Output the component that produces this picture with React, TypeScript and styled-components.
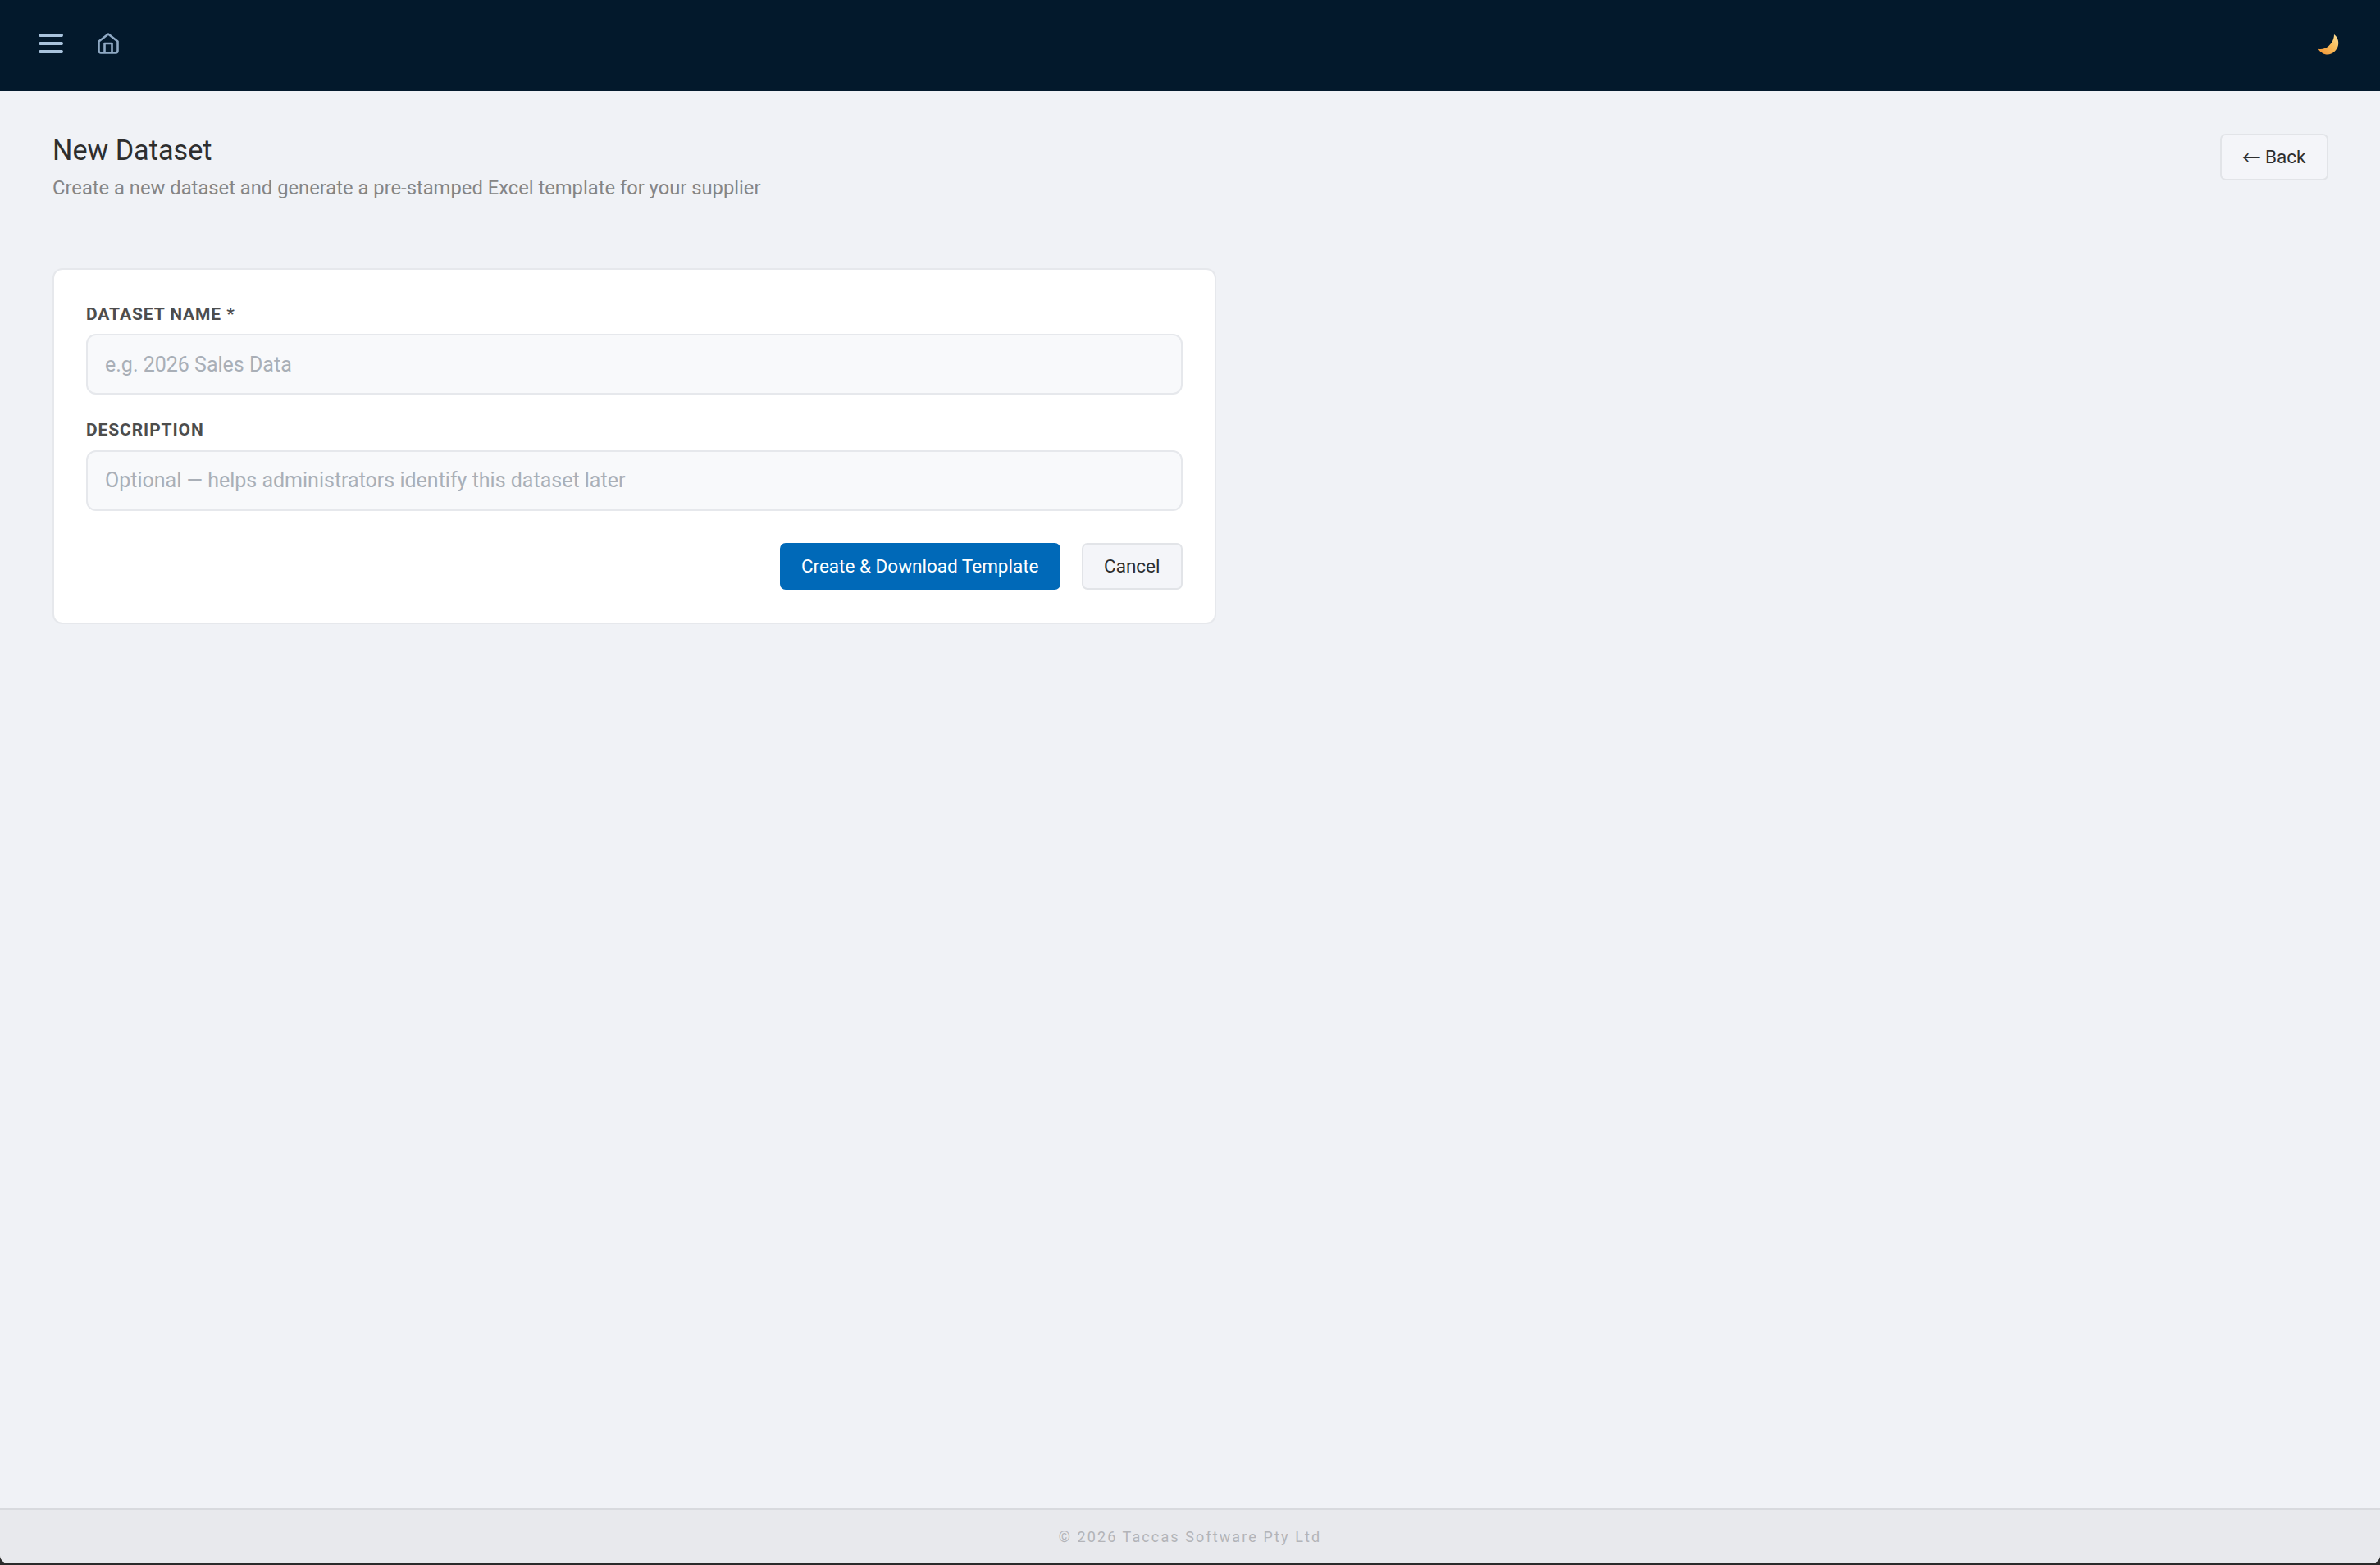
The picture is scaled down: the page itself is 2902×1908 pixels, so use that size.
import styled, { createGlobalStyle } from "styled-components";

const GlobalStyle = createGlobalStyle`
  html,
  body {
    margin: 0;
    padding: 0;
    height: 100%;
    background: #2b2b2b;
  }

  body {
    font-family: Roboto, "Liberation Sans", sans-serif;
  }

  * {
    box-sizing: border-box;
  }
`;

const Shell = styled.div`
  display: flex;
  flex-direction: column;
  width: 2902px;
  height: 1906px;
  overflow: hidden;
  border-radius: 0 0 10px 10px;
  background: #f0f2f6;
`;

const TopBar = styled.header`
  display: flex;
  align-items: center;
  justify-content: space-between;
  height: 111px;
  padding: 0 50px 5px 47px;
  background: #03192c;
  flex-shrink: 0;
`;

const TopBarGroup = styled.div`
  display: flex;
  align-items: center;
  gap: 42px;
`;

const IconSlot = styled.span<{ $nudge?: number }>`
  display: flex;
  line-height: 0;
  margin-top: ${(p) => p.$nudge ?? 0}px;
`;

const Main = styled.main`
  flex: 1;
  padding: 52px 63px 0 64px;
`;

const PageHead = styled.div`
  display: flex;
  justify-content: space-between;
  align-items: flex-start;
  margin-bottom: 82px;
`;

const Title = styled.h1`
  margin: 0;
  font-size: 34.2px;
  line-height: 40px;
  font-weight: 400;
  color: #2e2e2e;
`;

const Subtitle = styled.p`
  margin: 10px 0 0;
  font-size: 23.75px;
  line-height: 32px;
  color: #858585;
`;

const Button = styled.button<{ $primary?: boolean }>`
  height: 57px;
  padding: 0 ${(p) => (p.$primary ? 24 : 25.5)}px;
  border-radius: 7px;
  border: 2px solid ${(p) => (p.$primary ? "#0069b8" : "#e2e4e8")};
  background: ${(p) => (p.$primary ? "#0069b8" : "#f4f5f9")};
  color: ${(p) => (p.$primary ? "#ffffff" : "#2e2e2e")};
  font-family: inherit;
  font-size: 22.5px;
  white-space: nowrap;
`;

const BackButton = styled(Button)`
  padding-left: 25px;
  padding-bottom: 2px;
`;

const Arrow = styled.span`
  font-family: "Noto Sans CJK SC", "Liberation Sans", sans-serif;
  line-height: 1;
  vertical-align: -2px;
`;

const Card = styled.section`
  width: 1419px;
  padding: 40px 39px 40px;
  background: #ffffff;
  border: 2px solid #e6e8ec;
  border-radius: 12px;
`;

const Field = styled.div`
  margin-bottom: 29px;
`;

const Label = styled.label`
  display: block;
  margin-bottom: 10.4px;
  font-size: 21px;
  line-height: 28px;
  font-weight: 700;
  letter-spacing: 0.9px;
  color: #4d4d4d;
`;

const Input = styled.input`
  display: block;
  width: 100%;
  height: 74px;
  padding: 0 21px;
  border: 2px solid #e6e8ec;
  border-radius: 12px;
  background: #f8f9fb;
  font-family: inherit;
  font-size: 25px;
  color: #2e2e2e;

  &::placeholder {
    color: #a9afb7;
    opacity: 1;
  }
`;

const Actions = styled.div`
  display: flex;
  justify-content: flex-end;
  gap: 26px;
  margin-top: 39px;
`;

const Footer = styled.footer`
  display: flex;
  align-items: center;
  justify-content: center;
  height: 67px;
  flex-shrink: 0;
  border-top: 2px solid #d8dade;
  background: #e8e9ed;
  font-size: 18px;
  letter-spacing: 2.1px;
  color: #b3b4b8;
`;

const MenuIcon = () => (
  <svg width="30" height="26" viewBox="0 0 30 26" fill="none" stroke="#a9c3dd" strokeWidth="4" strokeLinecap="round">
    <path d="M2 3h26M2 13h26M2 23h26" />
  </svg>
);

const HomeIcon = () => (
  <svg width="26" height="26" viewBox="0 0 26 26" fill="none" stroke="#8fa9c4" strokeWidth="2.6" strokeLinejoin="round">
    <path d="M1.500 10.500 13 1.500l11.500 9v11.500a2.500 2.500 0 0 1-2.500 2.500H4a2.500 2.500 0 0 1-2.500-2.500z" />
    <path d="M8.500 24.500V13h9v11.500" />
  </svg>
);

const MoonIcon = () => (
  <svg width="26" height="25" viewBox="0 0 26 25">
    <defs>
      <linearGradient id="moonFill" x1="0" y1="1" x2="1" y2="0">
        <stop offset="0.1" stopColor="#f49a3a" />
        <stop offset="0.6" stopColor="#f9bf5e" />
        <stop offset="1" stopColor="#fde2a0" />
      </linearGradient>
    </defs>
    <path
      d="M20 0C24 3 26 8 25 13 24 19 18 24.500 12 24.500 7 24.500 3 21.500.7 17.700 5 18.500 9.500 17.500 13 14.500 17 11 20 6 20 0Z"
      fill="url(#moonFill)"
    />
  </svg>
);

export default function App() {
  return (
    <>
      <GlobalStyle />
      <Shell>
        <TopBar>
          <TopBarGroup>
            <IconSlot>
              <MenuIcon />
            </IconSlot>
            <IconSlot>
              <HomeIcon />
            </IconSlot>
          </TopBarGroup>
          <IconSlot $nudge={2}>
            <MoonIcon />
          </IconSlot>
        </TopBar>
        <Main>
          <PageHead>
            <div>
              <Title>New Dataset</Title>
              <Subtitle>Create a new dataset and generate a pre-stamped Excel template for your supplier</Subtitle>
            </div>
            <BackButton>
              <Arrow>←</Arrow> Back
            </BackButton>
          </PageHead>
          <Card>
            <Field>
              <Label>DATASET NAME *</Label>
              <Input placeholder="e.g. 2026 Sales Data" />
            </Field>
            <Field>
              <Label>DESCRIPTION</Label>
              <Input placeholder="Optional — helps administrators identify this dataset later" />
            </Field>
            <Actions>
              <Button $primary>Create &amp; Download Template</Button>
              <Button>Cancel</Button>
            </Actions>
          </Card>
        </Main>
        <Footer>© 2026 Taccas Software Pty Ltd</Footer>
      </Shell>
    </>
  );
}
